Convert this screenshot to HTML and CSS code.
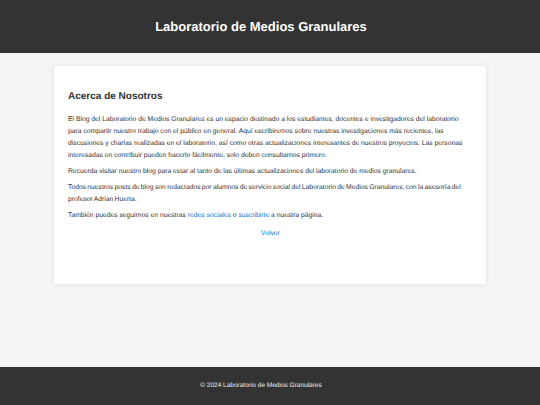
FILE: index.html
```html
<!DOCTYPE html>
<html lang="es">
<head>
<meta charset="utf-8">
<title>Acerca de Nosotros - Laboratorio de Medios Granulares</title>
<link rel="stylesheet" href="styles.css">
</head>
<body>
<header class="site-header">
  <h1 class="site-title">Laboratorio de Medios Granulares</h1>
</header>
<main class="site-main">
  <section class="card">
    <h2 class="card-title">Acerca de Nosotros</h2>
    <p>El Blog del Laboratorio de Medios Granulares es un espacio destinado a los estudiantes, docentes e investigadores del laboratorio para compartir nuestro trabajo con el público en general. Aquí escribiremos sobre nuestras investigaciones más recientes, las discusiones y charlas realizadas en el laboratorio, así como otras actualizaciones interesantes de nuestros proyectos. Las personas interesadas en contribuir pueden hacerlo fácilmente, solo deben consultarnos primero.</p>
    <p>Recuerda visitar nuestro blog para estar al tanto de las últimas actualizaciones del laboratorio de medios granulares.</p>
    <p class="tight">Todos nuestros posts de blog son redactados por alumnos de servicio social del Laboratorio de Medios Granulares, con la asesoría del profesor Adrian Huerta.</p>
    <p>También puedes seguirnos en nuestras <a href="#">redes sociales</a> o <a href="#">suscribirte</a> a nuestra página.</p>
    <div class="back"><a href="#">Volver</a></div>
  </section>
</main>
<footer class="site-footer">
  <p>© 2024 Laboratorio de Medios Granulares</p>
</footer>
</body>
</html>
```
FILE: styles.css
```css
* { box-sizing: border-box; }
html, body { margin: 0; padding: 0; }
body {
  font-family: "Liberation Sans", Arial, sans-serif;
  background: #f4f4f4;
  color: #333;
  min-height: 100vh;
  display: flex;
  flex-direction: column;
  font-size: 6.75px;
  line-height: 12px;
  text-rendering: geometricPrecision;
}
.site-header {
  background: #333;
  color: #fff;
  height: 53px;
  padding-right: 18px;
  display: flex;
  align-items: center;
  justify-content: center;
}
.site-title {
  margin: 0;
  font-size: 13px;
  font-weight: bold;
}
.site-main {
  flex: 1;
  padding-top: 13px;
}
.card {
  width: 432px;
  margin: 0 auto;
  background: #fff;
  padding: 14px 13px 44px 14px;
  box-shadow: 0 0 5px rgba(0,0,0,0.08);
}
.card-title {
  font-size: 10px;
  margin: 10.5px 0 11px;
  line-height: 12px;
}
.card p { margin: 0 0 4px; }
.card p.tight { word-spacing: -0.55px; }
.card a { color: #0077cc; text-decoration: none; }
.back { text-align: center; margin-top: 6px; }
.site-footer {
  background: #333;
  color: #eee;
  height: 38px;
  padding-right: 18px;
  display: flex;
  align-items: center;
  justify-content: center;
}
.site-footer p { margin: 0; font-size: 6.5px; }
```
